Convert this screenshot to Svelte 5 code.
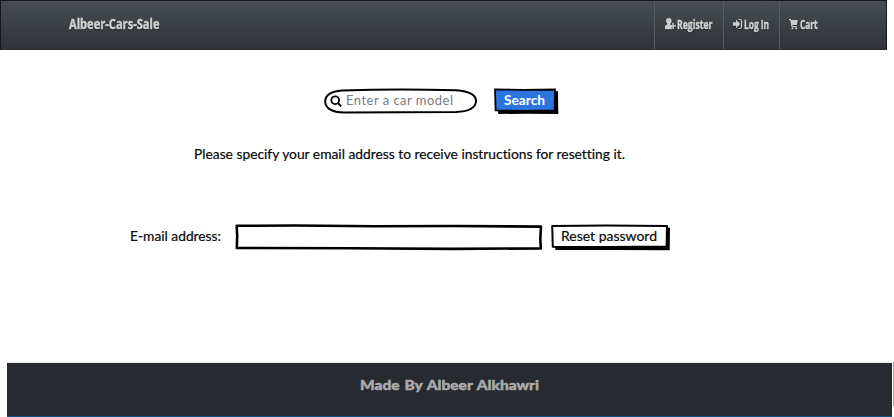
<script>
  const nav = [
    { id: 'user', label: 'Register', w: 69, tw: 35.5, iw: 12, pad: 10 },
    { id: 'login', label: 'Log In', w: 56, tw: 25, iw: 10.5, pad: 9 },
    { id: 'cart', label: 'Cart', w: 107, tw: 17.5, iw: 10.5, pad: 9 }
  ];
</script>

{#snippet label(text, width, cls, height = 20, base = 14)}
  <svg class="label {cls}" {width} {height} aria-label={text}>
    <text x="0" y={base} textLength={width} lengthAdjust="spacingAndGlyphs">{text}</text>
  </svg>
{/snippet}

<div class="page">
  <header>
    <div class="brand">{@render label('Albeer-Cars-Sale', 90.5, 'brandtext')}</div>
    <nav>
      {#each nav as item}
        <a href="#{item.id}" style="width: {item.w}px; padding-left: {item.pad}px">
          <svg class="icon" width={item.iw} height="12" viewBox="0 0 {item.iw} 12">
            {#if item.id === 'user'}
              <path d="M1 3a2.8 3.1 0 1 1 5.6 0c0 1.3-.5 2.2-1.1 2.7v1l1.3.6v4H0V8.8c0-1.4.8-1.8 2.2-2.4V5.5C1.5 4.9 1 4.3 1 3z" />
              <path d="M7.3 5h1.6v2.2H11v1.6H8.9v2.3H7.3V8.8H5.2V7.2h2.1z" />
            {:else if item.id === 'login'}
              <path d="M0 4.3h3V1.6L7.2 6 3 10.4V7.7H0z" />
              <path class="line" d="M5.5 1.5h1.3q1.7 0 1.7 1.7v5.6q0 1.7-1.7 1.7H5.5" />
            {:else}
              <path d="M0 1h2l.3 1h6.4L8 7H3.4l.2 1h4.3v1.2H2.5L1.2 2.2H0z" />
              <circle cx="3.5" cy="10.5" r="1.1" /><circle cx="7.2" cy="10.5" r="1.1" />
            {/if}
          </svg>
          {@render label(item.label, item.tw, 'navtext')}
        </a>
      {/each}
    </nav>
  </header>

  <main>
    <form class="search" onsubmit={(e) => e.preventDefault()}>
      <div class="searchbox">
        <svg class="art" width="154" height="26" viewBox="0 0 154 26">
          <path class="stroke" d="M18 2.5Q70 .8 132 2.2C146 3 152.5 7.5 152 13.5S146 23.5 132 24L20 24.5C8 24.5 1.2 20 1.2 13.5S8 3.3 18 2.5Z" />
          <circle class="stroke lens" cx="11.2" cy="12.2" r="3.9" />
          <path class="stroke" d="m14.2 15.2 3 3.2" />
        </svg>
        <input class="query" placeholder="Enter a car model" aria-label="Car model" />
      </div>
      <button class="go">
        <svg class="art" width="66" height="28" viewBox="0 0 66 28">
          <path d="M4 23h57V3l3 .2.3 22.8-32-.3L4.3 26z" />
          <path class="fill" d="M1 1.4 30 1.8 61 1.5l-.3 21L32 22.8l-30.4-.4z" />
        </svg>
        {@render label('Search', 41, 'searchtext')}
      </button>
    </form>

    <p>{@render label('Please specify your email address to receive instructions for resetting it.', 431, 'body')}</p>

    <form class="reset" onsubmit={(e) => e.preventDefault()}>
      <label for="email">{@render label('E-mail address:', 91, 'body')}</label>
      <div class="emailbox">
        <svg class="art" width="309" height="28" viewBox="0 0 309 28">
          <path class="stroke box" d="M1.7 1.8 60 1.5l80 .7 78-.2 88 .6-.7 12 .5 9.8-90 .5-100-.6-114-.4.4-12z" />
        </svg>
        <input id="email" />
      </div>
      <button class="send">
        <svg class="art" width="120" height="28" viewBox="0 0 120 28">
          <path d="M4 23h112V3.5l3 .2-.3 22.6-55-.3L4.5 26z" />
          <path class="stroke paper" d="M1.2 2 55 1.6l61 .5-.4 20.3-55 .6-58.8-.3z" />
        </svg>
        {@render label('Reset password', 96, 'body')}
      </button>
    </form>
  </main>

  <div class="bottom">
    <footer>{@render label('Made By Albeer Alkhawri', 179, 'made')}</footer>
    <i></i>
  </div>
</div>

<style>
  :global(body) { background: #fff; }
  .page { width: 894px; height: 417px; overflow: hidden; display: flex; flex-direction: column; background: #fff; font-family: Lato, "Open Sans", sans-serif; }
  svg { display: block; flex: none; overflow: visible; }
  text { font-variant-ligatures: none; }
  header { box-sizing: border-box; width: 887px; height: 50px; display: flex; justify-content: space-between; border: 1px solid #17181b; border-bottom-color: #2b2e31; background: linear-gradient(#484d55, #3a3f43 52%, #313438); }
  .brand { padding: 14px 0 0 67.5px; }
  nav { display: flex; }
  a { box-sizing: border-box; display: flex; align-items: flex-start; padding-top: 14px; border-left: 1px solid #575b61; text-decoration: none; }
  .icon { margin-top: 3px; fill: #ccc; filter: drop-shadow(0 1px 0 #202225); }
  .line { fill: none; stroke: #ccc; stroke-width: 1.2; }
  .brandtext, .navtext { fill: #d0d0d0; stroke: #d0d0d0; stroke-width: .45px; font: bold 14px "Open Sans", sans-serif; filter: drop-shadow(0 1px 0 #202225); }
  .navtext { font-size: 12px; }
  main { height: 312px; flex: none; }
  .search { display: flex; padding: 38px 0 0 324px; height: 28px; }
  .searchbox { display: flow-root; position: relative; width: 154px; height: 26px; margin-right: 15.5px; }
  .art { position: absolute; left: 0; top: 0; }
  .stroke { fill: none; stroke: #000; stroke-width: 2; stroke-linejoin: round; }
  .lens { stroke-width: 1.8; }
  .box { stroke-width: 2.6; }
  .paper { fill: #fff; }
  .fill { fill: #2c75de; stroke: #000; stroke-width: 1.8; }
  input { position: relative; box-sizing: border-box; border: 0; outline: 0; padding: 0; background: transparent; }
  .query { display: block; width: 125px; height: 20px; margin: 2px 0 0 22px; font: 13px Lato, sans-serif; letter-spacing: .48px; }
  .query::placeholder { color: #777b84; opacity: 1; }
  button { position: relative; display: block; border: 0; padding: 0; background: transparent; }
  button .label { position: relative; }
  .go { width: 66px; height: 26px; padding: 0 0 0 10.5px; }
  .searchtext { fill: #fff; font: bold 13px Lato, sans-serif; }
  .body { fill: #090909; stroke: #090909; stroke-width: .2px; font: 13px Lato, sans-serif; }
  p { margin: 0; padding: 29px 0 0 194px; height: 20px; }
  .reset { display: flex; padding: 59px 0 0 130px; }
  .reset label { width: 105px; padding-top: 3px; }
  .emailbox { position: relative; width: 309px; height: 28px; margin-right: 7px; }
  #email { width: 300px; height: 22px; margin: 3px; }
  .send { width: 120px; height: 28px; padding: 0 0 2px 10px; }
  .bottom { display: flex; height: 55px; flex: none; padding-left: 7px; }
  footer { box-sizing: border-box; width: 885px; height: 55px; border-top: 1px solid #e4e4e4; border-bottom: 1px solid #124f82; background: #272b30; padding: 13px 0 0 352.5px; }
  .made { fill: #aaa; stroke: #aaa; stroke-width: .45px; font: 900 14px Lato, sans-serif; }
  .made text { word-spacing: 1px; }
  .bottom i { width: 1px; height: 44px; margin-left: 1px; background: #aaa; }
</style>
